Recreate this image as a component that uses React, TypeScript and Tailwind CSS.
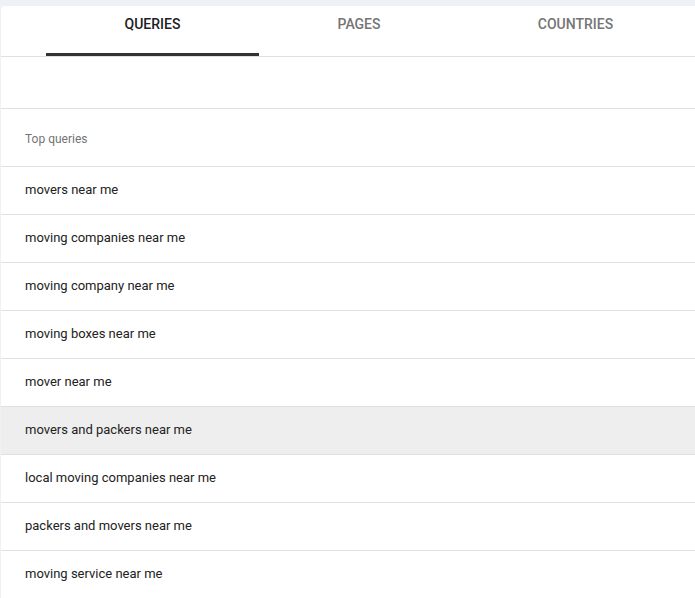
const tabs = [
  { label: 'QUERIES', width: 'w-[213px]', active: true },
  { label: 'PAGES', width: 'w-[200px]', active: false },
  { label: 'COUNTRIES', width: 'w-[233px]', active: false },
];

const queries = [
  'movers near me',
  'moving companies near me',
  'moving company near me',
  'moving boxes near me',
  'mover near me',
  'movers and packers near me',
  'local moving companies near me',
  'packers and movers near me',
  'moving service near me',
];

export default function App() {
  return (
    <div
      className="h-[598px] overflow-hidden bg-[#eef2f7] pt-[6px] pl-[1px]"
      style={{ fontFamily: 'Roboto, "Liberation Sans", sans-serif' }}
    >
      <div className="w-[720px] rounded-tl-[4px] bg-white">
        {/* Tabs */}
        <div className="flex h-[51px] border-b border-[#e0e0e0] pl-[45px]">
          {tabs.map((tab) => (
            <div
              key={tab.label}
              className={`${tab.width} flex flex-col items-center justify-between`}
            >
              <span
                className={`pt-[10px] text-[14px] font-medium leading-[16px] ${
                  tab.active ? 'text-[#202124]' : 'text-[#757575]'
                }`}
              >
                {tab.label}
              </span>
              <div className={`h-[3px] w-full ${tab.active ? 'bg-[#333333]' : 'bg-transparent'}`} />
            </div>
          ))}
        </div>

        {/* Empty filter row */}
        <div className="h-[52px] border-b border-[#e0e0e0]" />

        {/* Header */}
        <div className="flex h-[58px] items-center border-b border-[#e0e0e0] pl-[24px] pt-[2px]">
          <span className="text-[12px] text-[#757575]">Top queries</span>
        </div>

        {/* Rows */}
        {queries.map((q) => (
          <div
            key={q}
            className={`flex h-[48px] items-center border-b border-[#e0e0e0] pl-[24px] pb-[2px] ${
              q === 'movers and packers near me' ? 'bg-[#eeeeee]' : ''
            }`}
          >
            <span className="text-[13px] text-[#222222]">{q}</span>
          </div>
        ))}
      </div>
    </div>
  );
}
